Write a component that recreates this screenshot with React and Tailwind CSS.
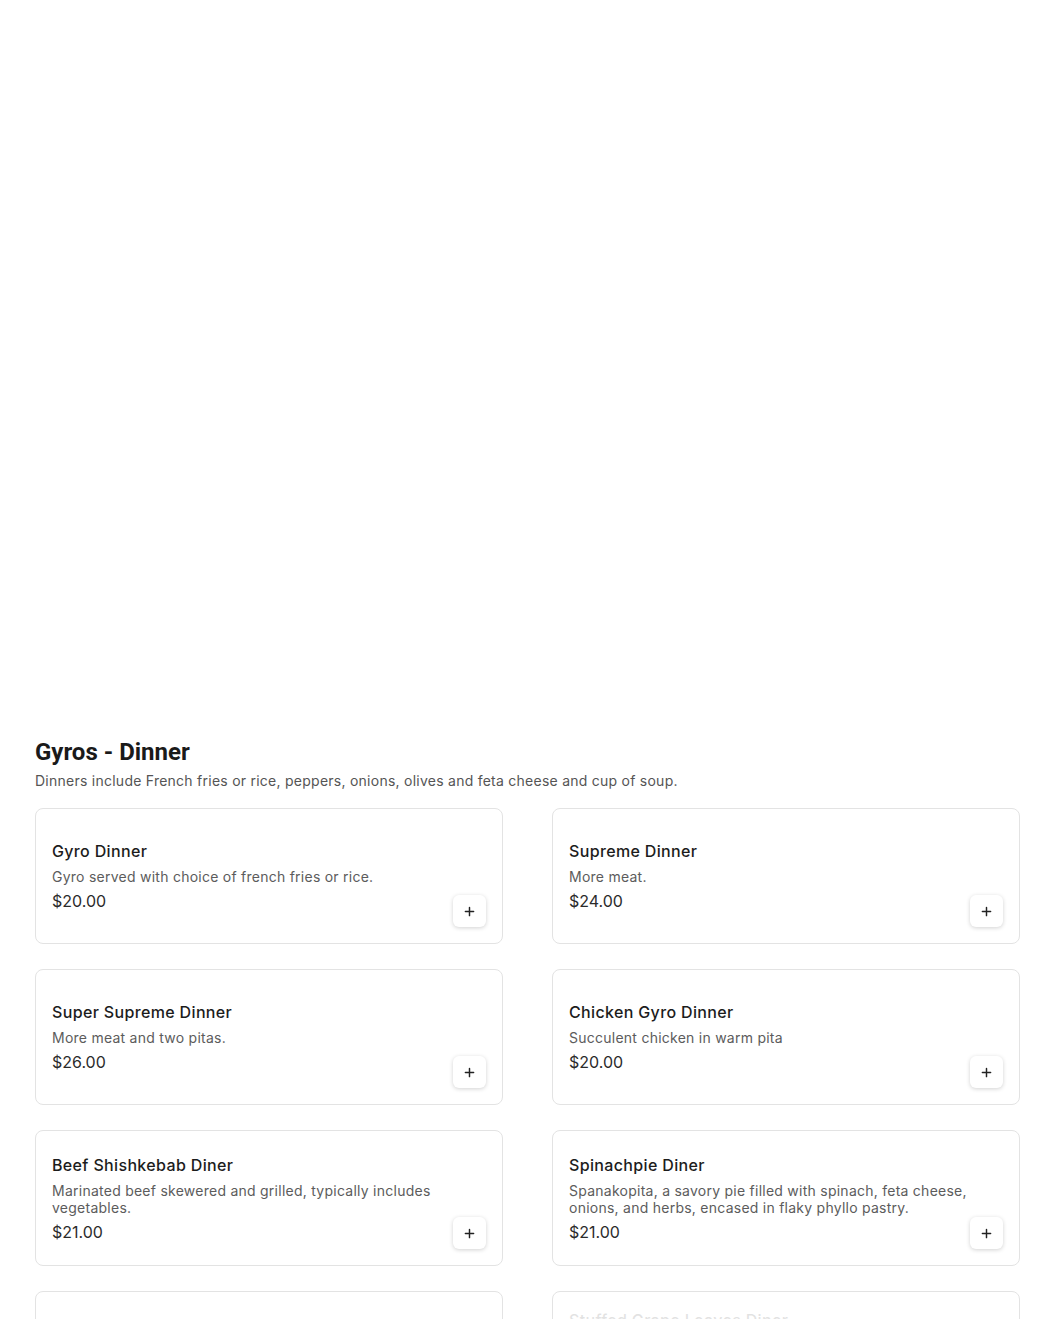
const items = [
  { name: "Gyro Dinner", desc: "Gyro served with choice of french fries or rice.", price: "$20.00" },
  { name: "Supreme Dinner", desc: "More meat.", price: "$24.00" },
  { name: "Super Supreme Dinner", desc: "More meat and two pitas.", price: "$26.00" },
  { name: "Chicken Gyro Dinner", desc: "Succulent chicken in warm pita", price: "$20.00" },
  {
    name: "Beef Shishkebab Diner",
    desc: "Marinated beef skewered and grilled, typically includes vegetables.",
    price: "$21.00",
  },
  {
    name: "Spinachpie Diner",
    desc: "Spanakopita, a savory pie filled with spinach, feta cheese, onions, and herbs, encased in flaky phyllo pastry.",
    price: "$21.00",
  },
  { name: "Chicken Shishkebab Diner", desc: "Marinated chicken skewered and grilled.", price: "$21.00" },
  {
    name: "Stuffed Grape Leaves Diner",
    desc: "Grape leaves stuffed with seasoned rice and herbs, served with french fries or rice, peppers, onions, olives, feta cheese and a cup of soup.",
    price: "$21.00",
    faded: true,
  },
];

function PlusIcon() {
  return (
    <svg width="11" height="11" viewBox="0 0 12 12" fill="none">
      <path d="M6 1.5v9M1.5 6h9" stroke="#222" strokeWidth="1.6" strokeLinecap="round" />
    </svg>
  );
}

function MenuCard({ item }) {
  return (
    <div className="flex min-h-[136px] rounded-lg border border-[#e3e3e3] bg-white p-4">
      <div className={"flex flex-1 flex-col self-center " + (item.faded ? "opacity-[0.12]" : "")}>
        <h3 className="text-[16px] leading-6 font-medium tracking-[0.35px] text-[#1c1c1c]">{item.name}</h3>
        <p className="mt-[5px] text-[14px] leading-[17px] tracking-[0.25px] text-[#5c5c5c]">{item.desc}</p>
        <p className="mt-[4px] text-[16px] leading-6 text-[#2b2b2b]">{item.price}</p>
      </div>
      <button className="flex h-8 w-[33px] shrink-0 items-center justify-center self-end rounded-md bg-white shadow-[0_1px_4px_rgba(0,0,0,0.18)]">
        <PlusIcon />
      </button>
    </div>
  );
}

export default function App() {
  return (
    <div className="min-h-screen bg-white font-['Inter',sans-serif]">
      <div className="h-[736px]" />
      <section className="pl-[35px] pr-[30px]">
        <h2 className="font-['Roboto',sans-serif] text-[24px] leading-8 font-bold text-[#1a1a1a]">
          Gyros - Dinner
        </h2>
        <p className="mt-[3px] text-[14px] leading-5 tracking-[0.25px] text-[#555]">
          Dinners include French fries or rice, peppers, onions, olives and feta cheese and cup of soup.
        </p>
        <div className="mt-[17px] grid grid-cols-2 gap-x-[49px] gap-y-[25px] pb-10">
          {items.map((item) => (
            <MenuCard key={item.name} item={item} />
          ))}
        </div>
      </section>
    </div>
  );
}
